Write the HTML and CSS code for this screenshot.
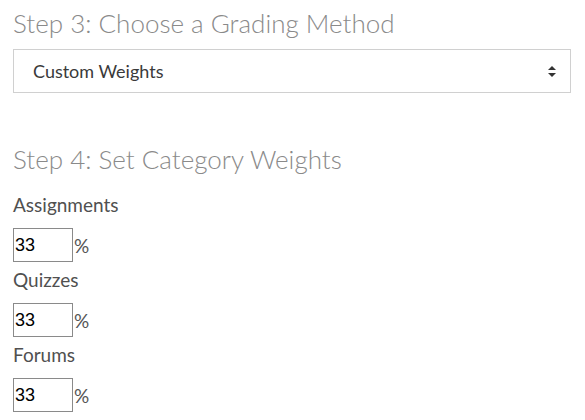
FILE: index.html
```html
<!DOCTYPE html>
<html lang="en">
<head>
    <meta charset="UTF-8">
    <title>Grading Setup</title>
    <link rel="stylesheet" href="styles.css">
</head>
<body>
    <div class="grading">
        <h2 class="step-title">Step 3: Choose a Grading Method</h2>
        <div class="select-wrap">
            <select class="method-select">
                <option>Custom Weights</option>
                <option>Total Points</option>
            </select>
            <svg class="select-arrow" width="8" height="11" viewBox="0 0 8 11">
                <polygon points="4,0 8,4 0,4" fill="#333"/>
                <polygon points="0,7 8,7 4,11" fill="#333"/>
            </svg>
        </div>

        <h2 class="step-title step-four">Step 4: Set Category Weights</h2>
        <div class="weights">
            <div class="weight-row">
                <label for="w-assign">Assignments</label>
                <div class="weight-field">
                    <input type="text" id="w-assign" value="33"><span>%</span>
                </div>
            </div>
            <div class="weight-row">
                <label for="w-quiz">Quizzes</label>
                <div class="weight-field">
                    <input type="text" id="w-quiz" value="33"><span>%</span>
                </div>
            </div>
            <div class="weight-row">
                <label for="w-forum">Forums</label>
                <div class="weight-field">
                    <input type="text" id="w-forum" value="33"><span>%</span>
                </div>
            </div>
        </div>
    </div>
</body>
</html>
```

FILE: styles.css
```css
/* General Styles */
body {
    margin: 0;
    padding: 0;
    background: #fff;
    font-family: 'Lato', 'Open Sans', sans-serif;
    color: #555;
}

.grading {
    padding: 0 14px 0 13px;
}

.step-title {
    font-family: 'Lato', sans-serif;
    font-weight: 300;
    font-size: 26px;
    line-height: 30px;
    color: #8a8a8a;
    margin: 8px 0 11px;
}

.step-four {
    margin-top: 51px;
    margin-bottom: 20px;
}

/* Grading method select */
.select-wrap {
    position: relative;
}

.method-select {
    appearance: none;
    -webkit-appearance: none;
    display: block;
    width: 100%;
    height: 44px;
    padding: 0 19px;
    border: 1px solid #d0d0d0;
    border-radius: 0;
    background: #fff;
    font-family: 'Lato', sans-serif;
    font-size: 18px;
    color: #3a3a3a;
    box-sizing: border-box;
}

.select-arrow {
    position: absolute;
    right: 15px;
    top: 17px;
}

/* Category weights */
.weights {
    display: flex;
    flex-direction: column;
    gap: 7px;
}

.weight-row label {
    display: block;
    font-size: 19px;
    line-height: 22px;
    color: #505050;
    margin-bottom: 12px;
}

.weight-field {
    display: flex;
    align-items: center;
}

.weight-field input {
    width: 60px;
    height: 34px;
    box-sizing: border-box;
    padding: 0 1px;
    border: 1px solid #8a8a8a;
    border-radius: 0;
    font-family: 'Liberation Sans', Arial, sans-serif;
    font-size: 18px;
    color: #000;
    margin: 0;
}

.weight-field span {
    font-size: 19px;
    color: #555;
    margin-left: 1px;
}
```
